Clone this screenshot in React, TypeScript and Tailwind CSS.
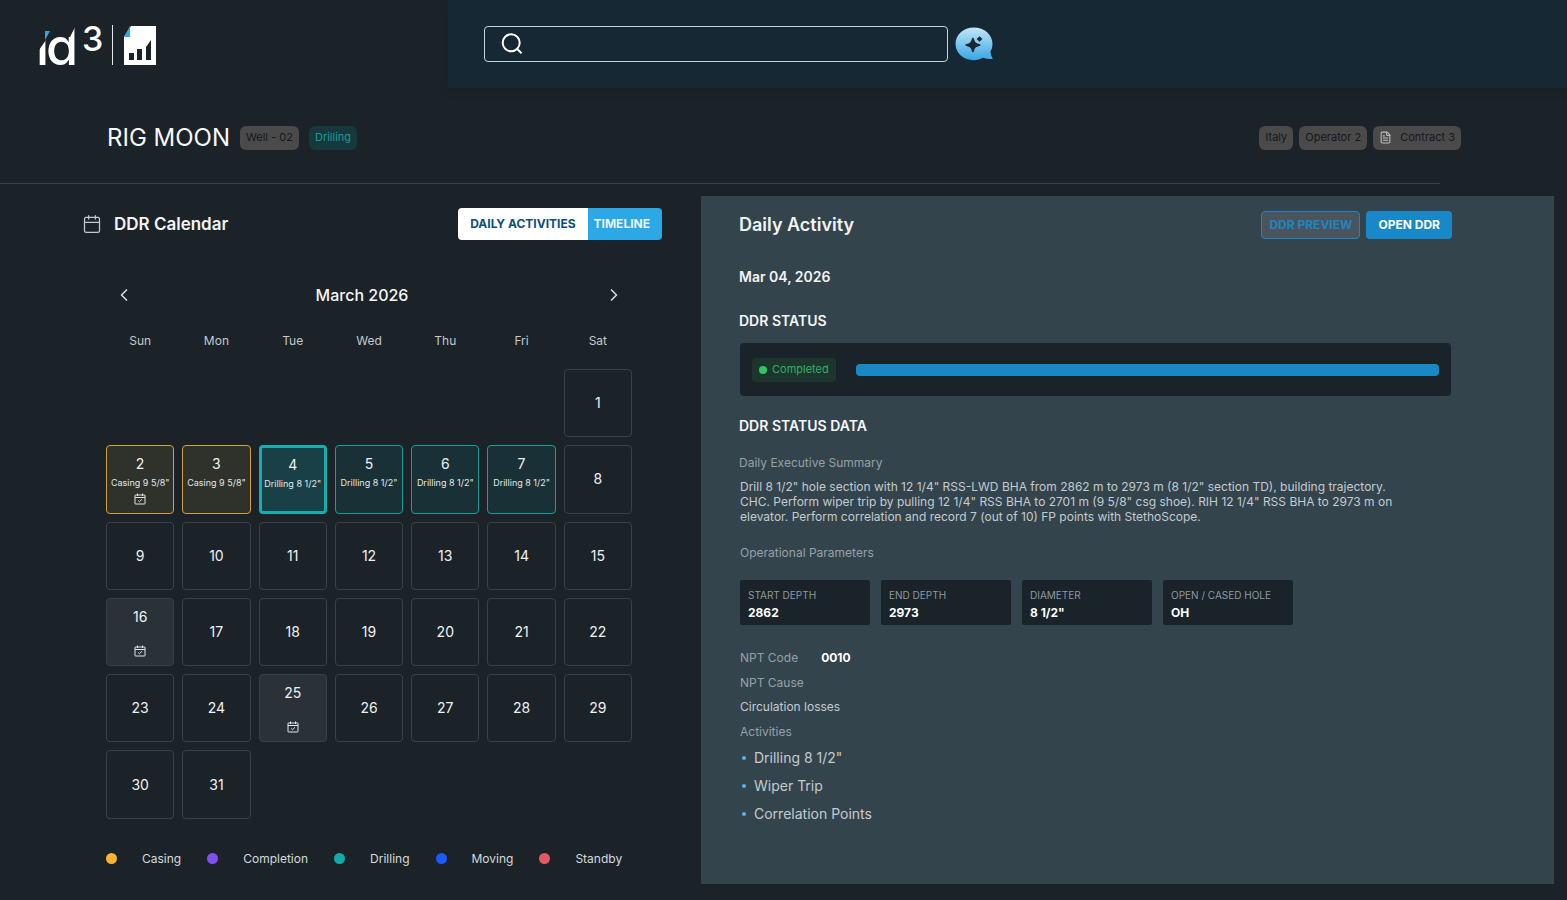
import React from "react";
import { Calendar, ChevronLeft, ChevronRight, FileText } from "lucide-react";

type Phase = "casing" | "drilling" | "selected" | "marked" | "none";

interface Day {
  day: number;
  phase: Phase;
  label?: string;
  event?: boolean;
}

const special: Record<number, Omit<Day, "day">> = {
  2: { phase: "casing", label: 'Casing 9 5/8"', event: true },
  3: { phase: "casing", label: 'Casing 9 5/8"' },
  4: { phase: "selected", label: 'Drilling 8 1/2"' },
  5: { phase: "drilling", label: 'Drilling 8 1/2"' },
  6: { phase: "drilling", label: 'Drilling 8 1/2"' },
  7: { phase: "drilling", label: 'Drilling 8 1/2"' },
  16: { phase: "marked", event: true },
  25: { phase: "marked", event: true },
};

const days: Day[] = Array.from({ length: 31 }, (_, i) => ({
  day: i + 1,
  ...(special[i + 1] ?? { phase: "none" as Phase }),
}));

const phaseClass: Record<Phase, string> = {
  casing: "border border-[#d3a23c] bg-[#2f312b]",
  drilling: "border border-[#16a09c] bg-[#193036]",
  selected: "border-3 border-[#14aeac] bg-[#194047]",
  marked: "border border-[#36424a] bg-[#2a3238]",
  none: "border border-[#36424a]",
};

const weekdays = ["Sun", "Mon", "Tue", "Wed", "Thu", "Fri", "Sat"];

const legend = [
  { name: "Casing", color: "bg-[#f9b234]" },
  { name: "Completion", color: "bg-[#814fee]" },
  { name: "Drilling", color: "bg-[#0eacab]" },
  { name: "Moving", color: "bg-[#1b59f8]" },
  { name: "Standby", color: "bg-[#e35a60]" },
];

const parameters = [
  { name: "START DEPTH", value: "2862" },
  { name: "END DEPTH", value: "2973" },
  { name: "DIAMETER", value: '8 1/2"' },
  { name: "OPEN / CASED HOLE", value: "OH" },
];

function Logo() {
  return (
    <svg width="128" height="76" viewBox="31 8 128 76" role="img" aria-label="id3">
      <text x="36" y="65" fill="#fff" fontFamily="Inter, sans-serif" fontWeight="500" fontSize="52">
        i<tspan dx="-3">d</tspan>
      </text>
      <polygon points="34,18 79,18 76,25 70,37 46,37 46,40 39,50 34,50" fill="#1b2329" />
      <polygon points="45,31 50,31 45,40" fill="#2fa8e6" />
      <text x="82" y="51" fill="#fff" fontFamily="Inter, sans-serif" fontWeight="500" fontSize="34">3</text>
      <rect x="112" y="25" width="1" height="40" fill="#e4e8ea" />
      <path d="M131 26H156V65H124V37Z" fill="#fff" />
      <path d="M130 26V37H124Z" fill="#2fa8e6" />
      <g fill="#1b2329">
        <rect x="129" y="53" width="5" height="7" />
        <rect x="137" y="49" width="5" height="11" />
        <path d="M146 47L151 40V60H146Z" />
      </g>
    </svg>
  );
}

function SearchIcon() {
  return (
    <svg width="22" height="22" viewBox="0 0 22 22" fill="none" stroke="#fff" strokeWidth="2" aria-hidden="true">
      <circle cx="10.200" cy="9.800" r="8.500" />
      <path d="M16 15.800L20.600 20.400" />
    </svg>
  );
}

function AssistantIcon() {
  return (
    <svg width="40" height="34" viewBox="0 0 38 34" preserveAspectRatio="none" aria-hidden="true">
      <defs>
        <linearGradient id="bubble" x1="0" y1="0" x2="0" y2="1">
          <stop offset="0" stopColor="#c4e6f7" />
          <stop offset="1" stopColor="#36a7e4" />
        </linearGradient>
      </defs>
      <path
        d="M18 0.500C28 0.500 35.600 7.600 35.600 17C35.600 20 34.800 22.500 33.600 24.800C34 28 35 30 36 32C33 32.300 29.500 31.800 26.500 30.700C24 32.200 21 33.200 18 33.200C8 33.200 0.500 26 0.500 17C0.500 7.600 8 0.500 18 0.500Z"
        fill="url(#bubble)"
      />
      <path
        d="M17 11.500C18.200 15.800 19.200 16.800 23.500 18C19.200 19.200 18.200 20.200 17 24.500C15.800 20.200 14.800 19.200 10.500 18C14.800 16.800 15.800 15.800 17 11.500Z"
        fill="#162833"
        stroke="#162833"
        strokeWidth="1.500"
        strokeLinejoin="round"
      />
      <path d="M23.300 9.300L26 12L23.300 14.700L20.600 12Z" fill="#162833" />
    </svg>
  );
}

function EventIcon() {
  return (
    <svg width="12" height="12" viewBox="0 0 12 12" fill="none" stroke="#e3e7e9" strokeWidth="1" aria-hidden="true">
      <rect x="1" y="2" width="10" height="9" rx="0.500" />
      <path d="M1 4.500H11M3.500 0.500V3M8.500 0.500V3" />
      <path d="M4.200 7.500L5.500 8.700L8 6.300" />
    </svg>
  );
}

function Chip({ children }: { children: React.ReactNode }) {
  return (
    <span className="flex h-6 items-center gap-2 rounded-md bg-[#4a4a4b] px-1.5 text-[11px] text-[#15181a]">
      {children}
    </span>
  );
}

function DayCell({ day, phase, label, event }: Day) {
  const plain = phase === "none";
  return (
    <button
      type="button"
      aria-pressed={phase === "selected"}
      className={`flex aspect-square w-full flex-col items-center rounded-sm ${phaseClass[phase]} ${
        plain ? "justify-center" : phase === "selected" ? "pt-[7px]" : "pt-2 pb-2"
      }`}
    >
      <span className="text-sm leading-5 text-[#eef1f2]">{day}</span>
      {label && <span className="text-[9px] leading-[18px] whitespace-nowrap text-[#e3e7e9]">{label}</span>}
      {event && (
        <span className="mt-auto">
          <EventIcon />
        </span>
      )}
    </button>
  );
}

function CalendarSection() {
  return (
    <section className="pr-[69px] pl-[106px]">
      <div className="-mr-[30px] -ml-6 flex h-8 items-center justify-between">
        <h2 className="flex items-center gap-3 text-[17px] leading-7 font-semibold text-[#f1f4f5]">
          <Calendar size={20} strokeWidth={1.5} className="text-[#c3c9cc]" />
          DDR Calendar
        </h2>
        <div className="flex h-8 overflow-hidden rounded text-xs font-bold">
          <button type="button" className="bg-white px-3 text-[#0d4f78]">
            DAILY ACTIVITIES
          </button>
          <button type="button" className="bg-[#2ca8e6] pr-3 pl-1.5 text-[#e6f5fd]">
            TIMELINE
          </button>
        </div>
      </div>

      <div className="mt-[39px] flex h-8 items-center justify-between px-2">
        <button type="button" aria-label="Previous month" className="text-[#d5dadc]">
          <ChevronLeft size={20} strokeWidth={2} />
        </button>
        <h3 className="pr-[14px] text-base font-medium text-[#f4f6f7]">March 2026</h3>
        <button type="button" aria-label="Next month" className="text-[#d5dadc]">
          <ChevronRight size={20} strokeWidth={2} />
        </button>
      </div>

      <div className="mt-5 grid grid-cols-7 gap-2 text-center text-xs leading-5 text-[#c3c9cc]">
        {weekdays.map((name) => (
          <span key={name}>{name}</span>
        ))}
      </div>

      <div className="mt-[18px] grid grid-cols-7 gap-2">
        {days.map((d) => (
          <div key={d.day} className={d.day === 1 ? "col-start-7" : ""}>
            <DayCell {...d} />
          </div>
        ))}
      </div>

      <ul className="mt-[30px] flex gap-[26px] text-xs leading-5 text-[#d5dadc]">
        {legend.map((item) => (
          <li key={item.name} className="flex items-center gap-[25px]">
            <span className={`size-[11px] rounded-full ${item.color}`} />
            {item.name}
          </li>
        ))}
      </ul>
    </section>
  );
}

function ActivityPanel() {
  return (
    <section className="mr-[13px] bg-[#34444d] pt-[15px] pr-[102px] pb-14 pl-[38px] text-xs text-[#c3cbd0]">
      <div className="flex h-7 items-center justify-between">
        <h2 className="text-lg font-semibold text-[#f1f4f5]">Daily Activity</h2>
        <div className="flex gap-1.5 text-xs font-bold">
          <button type="button" className="h-7 rounded border border-[#1b86c3] bg-[#4a545c] px-[7px] text-[#1b86c3]">
            DDR PREVIEW
          </button>
          <button type="button" className="h-7 rounded bg-[#1988c8] px-3 text-white">
            OPEN DDR
          </button>
        </div>
      </div>

      <p className="mt-7 text-sm leading-5 font-semibold text-[#f1f4f5]">Mar 04, 2026</p>
      <h3 className="mt-6 text-sm leading-5 font-semibold text-[#f4f7f8]">DDR STATUS</h3>

      <div className="mx-px mt-3 flex h-[53px] items-center gap-5 rounded bg-[#192329] px-3">
        <span className="flex h-6 items-center gap-[5px] rounded-sm bg-[#1e352d] px-[7px] text-[11px] text-[#26b567]">
          <span className="size-2 rounded-full bg-[#2bc765]" />
          Completed
        </span>
        <div
          role="progressbar"
          aria-label="DDR status"
          aria-valuenow={100}
          className="h-3 flex-1 rounded bg-[#1988c4]"
        />
      </div>

      <h3 className="mt-5 text-sm leading-5 font-semibold text-[#f4f7f8]">DDR STATUS DATA</h3>
      <h4 className="mt-[17px] leading-5 text-[#95a1a8]">Daily Executive Summary</h4>

      <div className="pl-px">
        <p className="mt-1.5 max-w-[660px] leading-[15px]">
          Drill 8 1/2" hole section with 12 1/4" RSS-LWD BHA from 2862 m to 2973 m (8 1/2" section TD), building
          trajectory.
          <br />
          CHC. Perform wiper trip by pulling 12 1/4" RSS BHA to 2701 m (9 5/8" csg shoe). RIH 12 1/4" RSS BHA to 2973 m
          on
          <br />
          elevator. Perform correlation and record 7 (out of 10) FP points with StethoScope.
        </p>

        <h4 className="mt-[19px] leading-5 text-[#95a1a8]">Operational Parameters</h4>
        <dl className="mt-[17px] flex gap-[11px]">
          {parameters.map((p) => (
            <div key={p.name} className="h-[45px] w-[130px] rounded-xs bg-[#192329] px-2 pt-[7px]">
              <dt className="text-[10px] leading-[17px] whitespace-nowrap text-[#8f999f]">{p.name}</dt>
              <dd className="text-xs leading-[17px] font-bold text-white">{p.value}</dd>
            </div>
          ))}
        </dl>

        <dl className="mt-[23px] flex gap-[23px] leading-5">
          <dt className="text-[#95a1a8]">NPT Code</dt>
          <dd className="font-bold text-white">0010</dd>
        </dl>
        <h4 className="mt-[5px] leading-5 text-[#95a1a8]">NPT Cause</h4>
        <p className="mt-1 leading-5">Circulation losses</p>
        <h4 className="mt-[5px] leading-5 text-[#95a1a8]">Activities</h4>
        <ul className="mt-0.5 text-sm leading-7">
          {['Drilling 8 1/2"', "Wiper Trip", "Correlation Points"].map((name) => (
            <li key={name} className="flex items-center gap-2 pl-0.5">
              <span className="size-1 rounded-full bg-[#5cb0ea]" />
              {name}
            </li>
          ))}
        </ul>
      </div>
    </section>
  );
}

export default function App() {
  return (
    <div className="min-h-screen bg-[#1b2329] font-['Inter',sans-serif]">
      <header className="flex h-[88px]">
        <div className="w-[448px] shrink-0 pt-2 pl-[31px]">
          <a href="#" aria-label="id3 home" className="inline-block">
            <Logo />
          </a>
        </div>
        <div className="flex flex-1 items-center gap-[7px] bg-[#162833] pl-9 shadow-[0_3px_6px_#18211f]">
          <label className="flex h-9 w-[464px] items-center gap-3 rounded border border-[#c4d3d8] px-4">
            <SearchIcon />
            <input type="search" aria-label="Search" className="min-w-0 flex-1 bg-transparent text-sm text-white outline-none" />
          </label>
          <button type="button" aria-label="Assistant">
            <AssistantIcon />
          </button>
        </div>
      </header>

      <div className="flex h-[95px] items-center justify-between pt-1 pr-[106px] pl-[107px]">
        <div className="flex items-center gap-2.5">
          <h1 className="text-2xl text-[#f6f8f9]">RIG MOON</h1>
          <Chip>Well - 02</Chip>
          <span className="flex h-6 items-center rounded-md bg-[#17383d] px-1.5 text-[11px] text-[#179c94]">Drilling</span>
        </div>
        <div className="flex items-center gap-1.5">
          <Chip>Italy</Chip>
          <Chip>Operator 2</Chip>
          <Chip>
            <FileText size={13} strokeWidth={2} className="text-[#b9bcbe]" />
            Contract 3
          </Chip>
        </div>
      </div>
      <hr className="mr-[127px] border-[#36434a]" />

      <main className="grid grid-cols-[701fr_866fr] pt-3 pb-4">
        <div className="pt-3">
          <CalendarSection />
        </div>
        <ActivityPanel />
      </main>
    </div>
  );
}
